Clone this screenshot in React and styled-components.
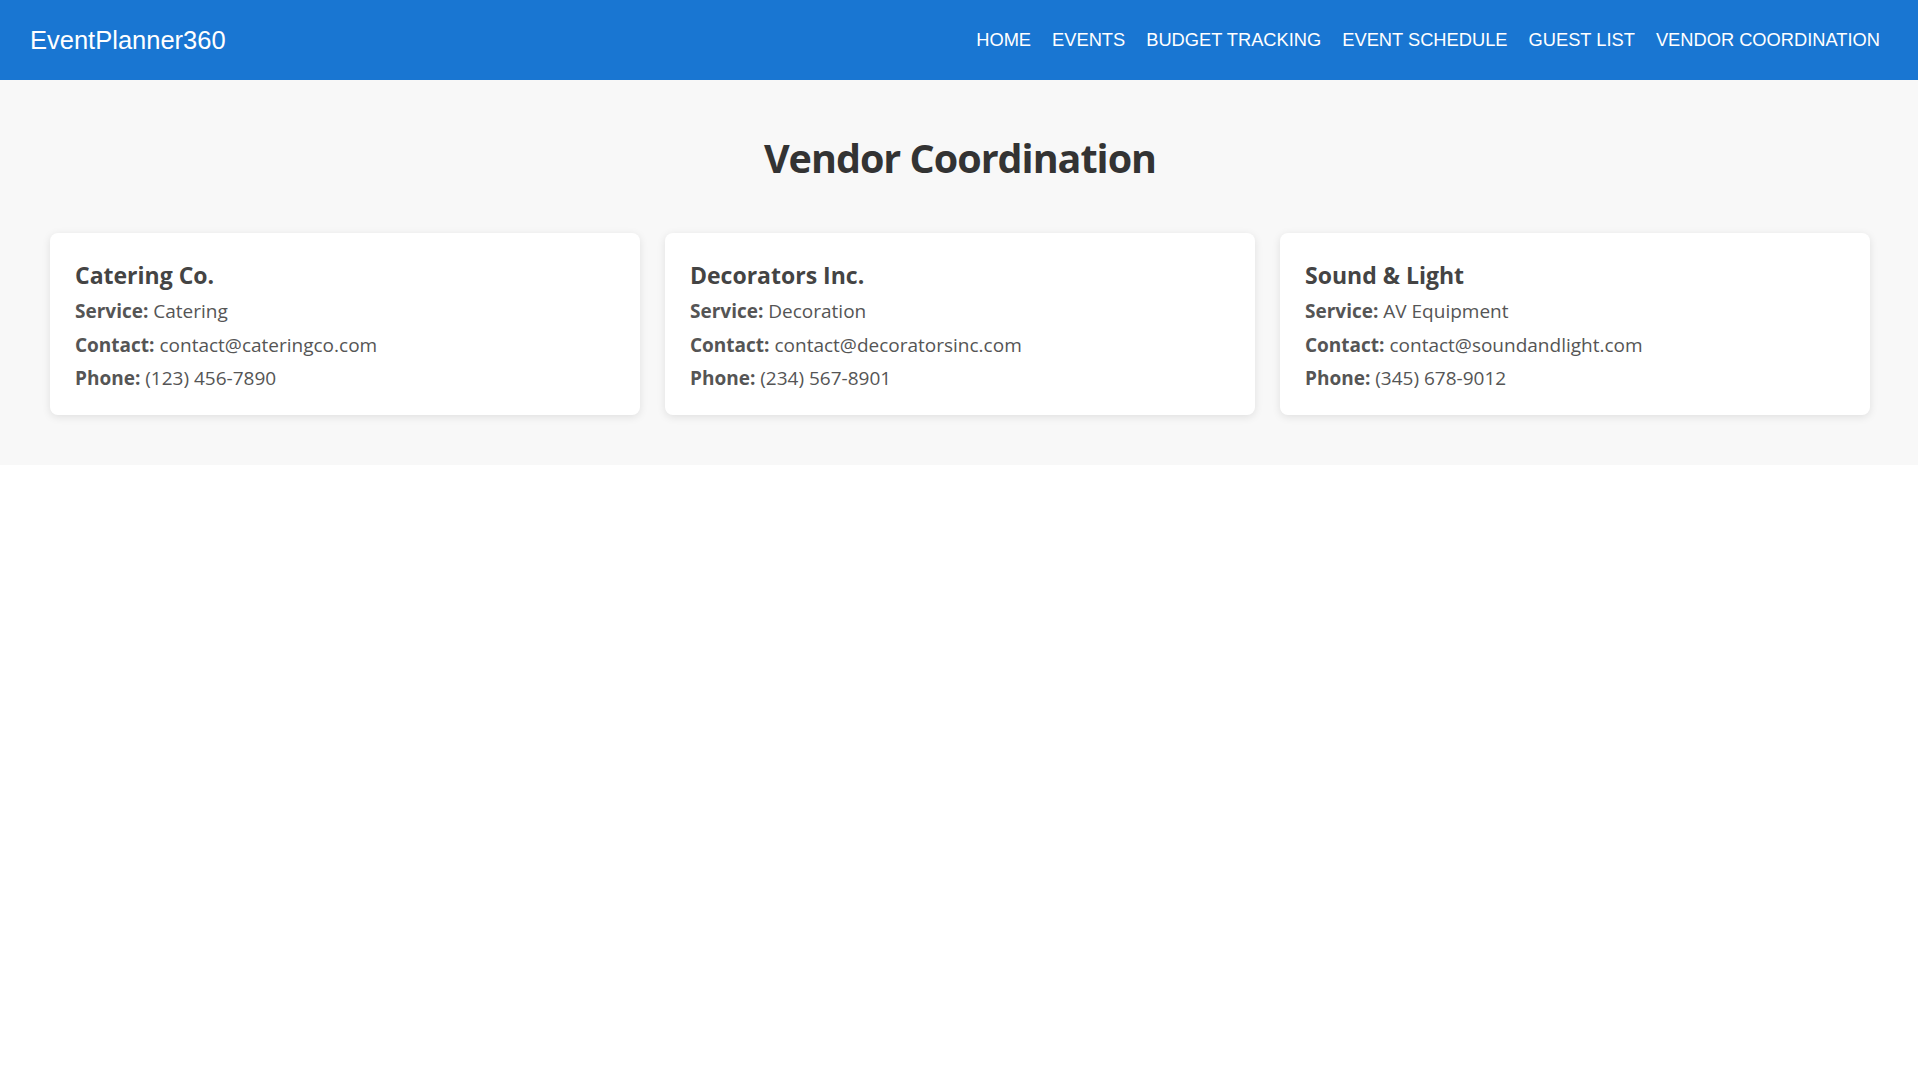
import styled, { createGlobalStyle } from "styled-components";

const vendors = [
  {
    name: "Catering Co.",
    service: "Catering",
    contact: "contact@cateringco.com",
    phone: "(123) 456-7890",
  },
  {
    name: "Decorators Inc.",
    service: "Decoration",
    contact: "contact@decoratorsinc.com",
    phone: "(234) 567-8901",
  },
  {
    name: "Sound & Light",
    service: "AV Equipment",
    contact: "contact@soundandlight.com",
    phone: "(345) 678-9012",
  },
];

const navLinks = [
  "Home",
  "Events",
  "Budget Tracking",
  "Event Schedule",
  "Guest List",
  "Vendor Coordination",
];

const GlobalStyle = createGlobalStyle`
  * { box-sizing: border-box; }
  body {
    margin: 0;
    background: #fff;
    font-family: "Open Sans", "Noto Sans", sans-serif;
  }
`;

const Header = styled.header`
  height: 80px;
  display: flex;
  align-items: center;
  justify-content: space-between;
  padding: 0 38px 0 30px;
  background: #1976d2;
  color: #fff;
  font-family: "Liberation Sans", Arial, sans-serif;
`;

const Logo = styled.div`
  font-size: 25.5px;
`;

const Nav = styled.nav`
  display: flex;
  align-items: center;
  gap: 21px;
`;

const NavLink = styled.a`
  color: #fff;
  text-decoration: none;
  text-transform: uppercase;
  font-size: 18.3px;
`;

const Section = styled.section`
  background: #f8f8f8;
  padding: 54px 48px 50px 50px;
`;

const Title = styled.h2`
  margin: 0 0 51px;
  text-align: center;
  font-size: 39.5px;
  line-height: 48px;
  letter-spacing: -1px;
  font-weight: 700;
  color: #333;
`;

const Grid = styled.div`
  display: grid;
  grid-template-columns: repeat(3, 1fr);
  gap: 25px;
`;

const Card = styled.div`
  background: #fff;
  border-radius: 8px;
  padding: 26px 25px 19px;
  box-shadow: 0 2px 8px rgba(0, 0, 0, 0.1);
  color: #555;
`;

const CardName = styled.h3`
  margin: 0 0 4px;
  font-size: 23px;
  line-height: 32px;
  font-weight: 700;
  color: #444;
`;

const Line = styled.p`
  margin: 0;
  font-size: 19px;
  line-height: 33.5px;

  strong {
    font-weight: 700;
  }
`;

export default function App() {
  return (
    <>
      <GlobalStyle />
      <Header>
        <Logo>EventPlanner360</Logo>
        <Nav>
          {navLinks.map((l) => (
            <NavLink key={l} href="#">
              {l}
            </NavLink>
          ))}
        </Nav>
      </Header>
      <Section>
        <Title>Vendor Coordination</Title>
        <Grid>
          {vendors.map((v) => (
            <Card key={v.name}>
              <CardName>{v.name}</CardName>
              <Line>
                <strong>Service:</strong> {v.service}
              </Line>
              <Line>
                <strong>Contact:</strong> {v.contact}
              </Line>
              <Line>
                <strong>Phone:</strong> {v.phone}
              </Line>
            </Card>
          ))}
        </Grid>
      </Section>
    </>
  );
}
